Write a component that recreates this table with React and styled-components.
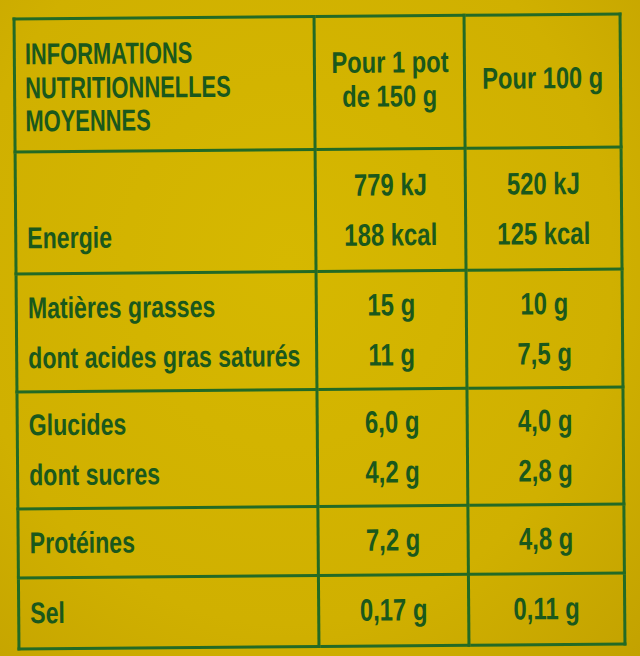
import styled, { createGlobalStyle } from "styled-components";

const GlobalStyle = createGlobalStyle`
  html, body {
    margin: 0;
    padding: 0;
  }
  body {
    width: 640px;
    height: 656px;
    overflow: hidden;
    background: radial-gradient(ellipse at 45% 40%, #d6b800 0%, #d0b000 65%, #c3a200 100%);
    font-family: "Liberation Sans", Arial, sans-serif;
  }
`;

const green = "#236a25";

const Label = styled.div`
  width: 640px;
  height: 656px;
  box-sizing: border-box;
  padding: 15px 0 0 15px;
`;

const Table = styled.table`
  border-collapse: collapse;
  table-layout: fixed;
  width: 606px;
  border: 3px solid ${green};
  color: #1a581c;
  font-weight: 700;
  transform: rotate(-0.45deg);
`;

const Col = styled.col`
  width: ${(p) => p.$w}px;
`;

const Row = styled.tr`
  height: ${(p) => p.$h}px;
`;

const Cell = styled.td`
  border: 3px solid ${green};
  padding: ${(p) => p.$pad || "0"};
  text-align: ${(p) => p.$align || "left"};
  vertical-align: middle;
  white-space: nowrap;
`;

/* the print uses a narrow DIN-like face: squeeze Liberation Sans to match */
const Stack = styled.div`
  font-size: ${(p) => p.$size}px;
  line-height: ${(p) => p.$lh}px;
  transform: scaleX(${(p) => p.$sx});
  transform-origin: ${(p) => (p.$align === "center" ? "50% 50%" : "0 50%")};
`;

const Caps = styled(Stack)`
  text-transform: uppercase;
`;

const Line = styled.div``;

const rows = [
  { h: 122, label: ["\u00a0", "Energie"], pot: ["779 kJ", "188 kcal"], per100: ["520 kJ", "125 kcal"] },
  { h: 118, label: ["Matières grasses", "dont acides gras saturés"], pot: ["15 g", "11 g"], per100: ["10 g", "7,5 g"] },
  { h: 117, label: ["Glucides", "dont sucres"], pot: ["6,0 g", "4,2 g"], per100: ["4,0 g", "2,8 g"] },
  { h: 69, label: ["Protéines"], pot: ["7,2 g"], per100: ["4,8 g"] },
  { h: 71, label: ["Sel"], pot: ["0,17 g"], per100: ["0,11 g"] },
];

const lines = (items) => items.map((t, i) => <Line key={i}>{t}</Line>);

function Values({ items }) {
  return (
    <Cell $align="center">
      <Stack $align="center" $size={31} $lh={50} $sx={0.77}>
        {lines(items)}
      </Stack>
    </Cell>
  );
}

export default function App() {
  return (
    <>
      <GlobalStyle />
      <Label>
        <Table>
          <colgroup>
            <Col $w={300} />
            <Col $w={150} />
            <Col $w={156} />
          </colgroup>
          <tbody>
            <Row $h={133}>
              <Cell $pad="5px 0 0 9px">
                <Caps $size={30} $lh={33.5} $sx={0.73}>
                  {lines(["Informations", "nutritionnelles", "moyennes"])}
                </Caps>
              </Cell>
              <Cell $align="center" $pad="0 0 6px">
                <Stack $align="center" $size={30} $lh={34} $sx={0.79}>
                  {lines(["Pour 1 pot", "de 150 g"])}
                </Stack>
              </Cell>
              <Cell $align="center" $pad="0 0 6px">
                <Stack $align="center" $size={30} $lh={34} $sx={0.79}>
                  Pour 100 g
                </Stack>
              </Cell>
            </Row>
            {rows.map((r) => (
              <Row key={r.label.join()} $h={r.h}>
                <Cell $pad="0 0 0 10px">
                  <Stack $size={30} $lh={50} $sx={0.77}>
                    {lines(r.label)}
                  </Stack>
                </Cell>
                <Values items={r.pot} />
                <Values items={r.per100} />
              </Row>
            ))}
          </tbody>
        </Table>
      </Label>
    </>
  );
}
